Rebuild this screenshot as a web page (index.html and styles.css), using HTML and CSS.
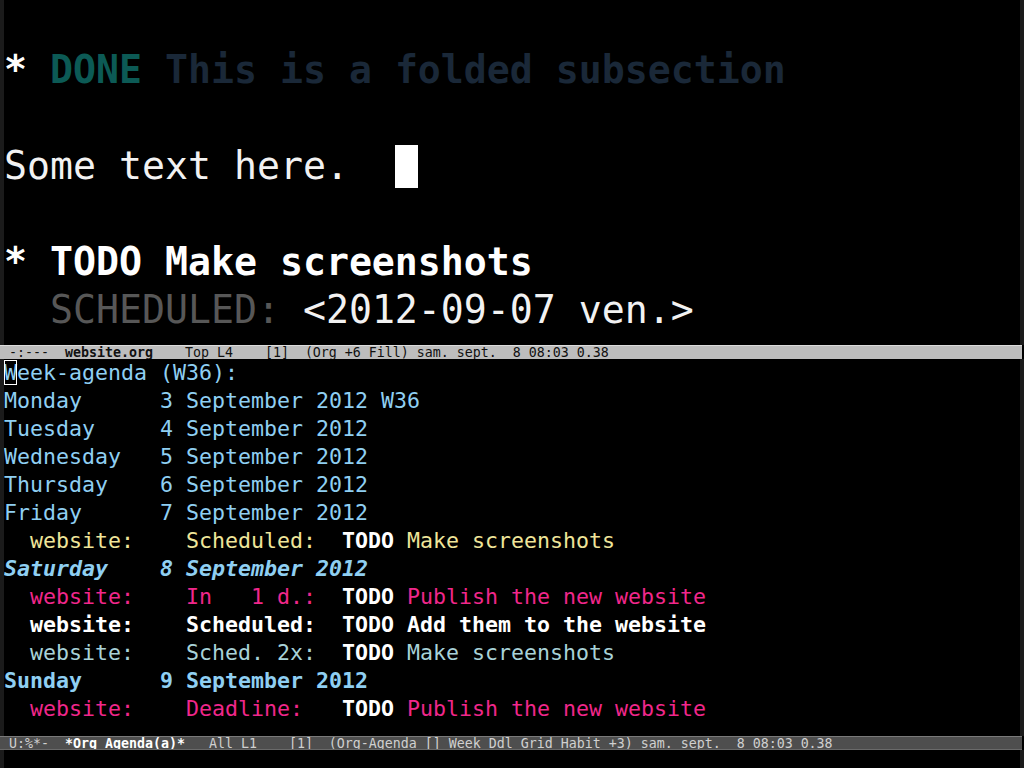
FILE: index.html
```html
<!DOCTYPE html>
<html>
<head>
<meta charset="utf-8">
<link rel="stylesheet" href="styles.css">
</head>
<body>
<div class="frame">
  <div class="window top">
    <div class="text big">
      <div class="line"> </div>
      <div class="line"><span class="star">*</span> <span class="done">DONE</span> <span class="done-head">This is a folded subsection</span></div>
      <div class="line"> </div>
      <div class="line"><span class="plain">Some text here.  </span><span class="cursor"></span></div>
      <div class="line"> </div>
      <div class="line"><span class="star">*</span> <span class="todo-head">TODO Make screenshots</span></div>
      <div class="line">  <span class="sched-kw">SCHEDULED:</span> <span class="plain">&lt;2012-09-07 ven.&gt;</span></div>
    </div>
  </div>
  <div class="modeline active">-:---  <b>website.org</b>    Top L4    [1]  (Org +6 Fill) sam. sept.  8 08:03 0.38</div>
  <div class="window agenda">
    <div class="text small">
      <div class="row"><span class="day"><span class="hollow">W</span>eek-agenda (W36):</span></div>
      <div class="row"><span class="day">Monday      3 September 2012 W36</span></div>
      <div class="row"><span class="day">Tuesday     4 September 2012</span></div>
      <div class="row"><span class="day">Wednesday   5 September 2012</span></div>
      <div class="row"><span class="day">Thursday    6 September 2012</span></div>
      <div class="row"><span class="day">Friday      7 September 2012</span></div>
      <div class="row"><span class="yel">  website:    Scheduled:  </span><span class="kw">TODO</span><span class="yel"> Make screenshots</span></div>
      <div class="row"><span class="day today">Saturday    8 September 2012</span></div>
      <div class="row"><span class="pink">  website:    In   1 d.:  </span><span class="kw">TODO</span><span class="pink"> Publish the new website</span></div>
      <div class="row"><span class="wht">  website:    Scheduled:  TODO Add them to the website</span></div>
      <div class="row"><span class="prev">  website:    Sched. 2x:  </span><span class="kw">TODO</span><span class="prev"> Make screenshots</span></div>
      <div class="row"><span class="day weekend">Sunday      9 September 2012</span></div>
      <div class="row"><span class="pink">  website:    Deadline:   </span><span class="kw">TODO</span><span class="pink"> Publish the new website</span></div>
    </div>
  </div>
  <div class="modeline inactive">U:%*-  <b>*Org Agenda(a)*</b>   All L1    [1]  (Org-Agenda [] Week Ddl Grid Habit +3) sam. sept.  8 08:03 0.38</div>
  <div class="window mini"></div>
</div>
</body>
</html>
```

FILE: styles.css
```css
html, body {
  margin: 0;
  padding: 0;
  background: #000;
}

.frame {
  width: 1024px;
  height: 768px;
  display: flex;
  flex-direction: column;
  overflow: hidden;
  font-family: "DejaVu Sans Mono", monospace;
}

.window {
  flex: none;
  background: #000;
  border-left: 4px solid #1b1b1b;
  border-right: 4px solid #1b1b1b;
  overflow: hidden;
}

.top {
  height: 345px;
}

.agenda {
  height: 377px;
}

.mini {
  height: 18px;
}

.line,
.row {
  white-space: pre;
}

.big {
  font-size: 38.2px;
  line-height: 48px;
  margin-top: -2px;
  color: #f2f2f2;
}

.big .line {
  height: 48px;
}

.star {
  font-weight: bold;
  color: #ffffff;
}

.done {
  font-weight: bold;
  color: #0c5a55;
}

.done-head {
  font-weight: bold;
  color: #1a2838;
}

.todo-head {
  font-weight: bold;
  color: #ffffff;
}

.plain {
  color: #f2f2f2;
}

.sched-kw {
  color: #575757;
}

.cursor {
  display: inline-block;
  width: 23px;
  height: 43px;
  background: #ffffff;
  vertical-align: text-bottom;
}

.small {
  font-size: 21.6px;
  line-height: 28px;
}

.small .row {
  height: 28px;
}

.day {
  color: #8fcff2;
}

.today {
  font-weight: bold;
  font-style: italic;
}

.weekend {
  font-weight: bold;
}

.hollow {
  outline: 1px solid #ffffff;
  outline-offset: -1px;
}

.yel {
  color: #efe59a;
}

.pink {
  color: #f0278b;
}

.wht {
  color: #ffffff;
  font-weight: bold;
}

.prev {
  color: #a8d2d8;
}

.kw {
  color: #ffffff;
  font-weight: bold;
}

.modeline {
  flex: none;
  height: 14px;
  box-sizing: border-box;
  width: 1022px;
  padding-left: 9px;
  font-size: 13.29px;
  line-height: 13px;
  white-space: pre;
  overflow: hidden;
}

.modeline.active {
  background: #bdbdbd;
  border-top: 1px solid #dcdcdc;
  color: #111111;
}

.modeline.inactive {
  background: #4e4e4e;
  border-top: 1px solid #7a7a7a;
  border-bottom: 1px solid #6a6a6a;
  color: #d0d0d0;
}

.modeline.inactive b {
  color: #ffffff;
}
```
